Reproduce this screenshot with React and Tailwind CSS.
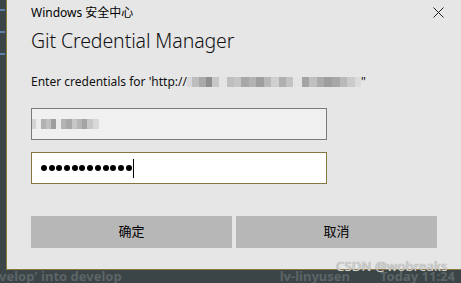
import React from "react";

const Blur = ({ blocks }) => (
  <span className="inline-flex items-center align-middle">
    {blocks.map((b, i) => (
      <span
        key={i}
        className="inline-block h-[10px]"
        style={{ width: b[0], backgroundColor: b[1] }}
      />
    ))}
  </span>
);

const urlBlocks = [
  [5, "#d8d8d8"], [7, "#bdbdbd"], [7, "#a9a9a9"], [6, "#8f8f8f"], [7, "#c8c8c8"],
  [8, "#e4e4e4"], [7, "#bfbfbf"], [7, "#c6c6c6"], [8, "#a8a8a8"], [7, "#b3b3b3"],
  [8, "#9f9f9f"], [7, "#b8b8b8"], [8, "#cfcfcf"], [7, "#b0b0b0"], [7, "#c3c3c3"],
  [9, "#e4e4e4"], [7, "#a4a4a4"], [8, "#c0c0c0"], [7, "#ababab"], [8, "#9e9e9e"],
  [8, "#a7a7a7"], [7, "#b9b9b9"], [8, "#cbcbcb"], [6, "#dcdcdc"],
];

const userBlocks = [
  [4, "#d4d4d4"], [5, "#ececec"], [5, "#b2b2b2"], [5, "#c0c0c0"], [5, "#9e9e9e"],
  [5, "#ececec"], [5, "#b4b4b4"], [6, "#a8a8a8"], [5, "#c6c6c6"], [5, "#b6b6b6"],
  [5, "#a4a4a4"], [6, "#c8c8c8"], [6, "#d8d8d8"],
];

export default function App() {
  const dots = Array.from({ length: 12 });
  return (
    <div
      className="relative w-[461px] h-[283px] overflow-hidden bg-[#3b4446] flex flex-col"
      style={{ fontFamily: '"Noto Sans", "Noto Sans CJK SC", sans-serif' }}
    >
      <div className="flex h-[274px]">
        <div className="w-[6px] flex flex-col gap-[20px] pt-[9px]">
          <div className="h-[2px] w-[5px] bg-[#5b7fa6]" />
          <div className="h-[2px] w-[5px] bg-[#5b7fa6]" />
          <div className="h-[2px] w-[5px] bg-[#5b7fa6]" />
        </div>
        <div className="flex-1 bg-[#e6e6e6] border-l border-b border-[#8a7a3c] flex flex-col pl-[24px] pr-[24px]">
          <div className="flex items-center justify-between h-[24px] pt-[1px]">
            <span className="text-[12px] text-black leading-none">Windows 安全中心</span>
            <svg width="11" height="11" viewBox="0 0 11 11" className="mr-[-7px]">
              <path d="M0.5 0.5L10.5 10.5M10.5 0.5L0.5 10.5" stroke="#222" strokeWidth="1" />
            </svg>
          </div>
          <div className="mt-[4px] text-[19.5px] leading-[26px] text-[#111] font-light tracking-[-0.1px]">
            Git Credential Manager
          </div>
          <div className="mt-[20px] text-[12px] leading-[16px] text-[#111] flex items-center">
            <span>Enter credentials for 'http://</span>
            <Blur blocks={urlBlocks} />
            <span>"</span>
          </div>
          <div className="mt-[18px] w-[296px] h-[32px] border border-[#7a7a7a] bg-[#f0f0f0] flex items-center">
            <Blur blocks={userBlocks} />
          </div>
          <div className="mt-[12px] w-[296px] h-[32px] border border-[#86773e] bg-white flex items-center pl-[9px]">
            <div className="flex gap-[1.7px]">
              {dots.map((_, i) => (
                <span key={i} className="w-[6px] h-[6px] rounded-full bg-black" />
              ))}
            </div>
            <span className="ml-[1px] w-[1px] h-[19px] bg-black" />
          </div>
          <div className="mt-[32px] flex gap-[4px] w-[406px]">
            <button className="flex-1 h-[32px] bg-[#b7b7b7] text-[13px] text-black">确定</button>
            <button className="flex-1 h-[32px] bg-[#b7b7b7] text-[13px] text-black">取消</button>
          </div>
        </div>
      </div>
      <div className="flex-1 flex items-start text-[13px] leading-[13px] font-bold text-[#5c6567] whitespace-nowrap">
        <span className="ml-[-1px]">velop' into develop</span>
        <span className="ml-[158px]">lv-linyusen</span>
        <span className="ml-[30px]">Today 11:24</span>
      </div>
      <div
        className="absolute left-[336px] top-[259px] text-[13px] leading-[14px] text-[#d4d4d4] tracking-[0.2px]"
        style={{ textShadow: "0 0 1px #777" }}
      >
        CSDN @wobreaks
      </div>
    </div>
  );
}
